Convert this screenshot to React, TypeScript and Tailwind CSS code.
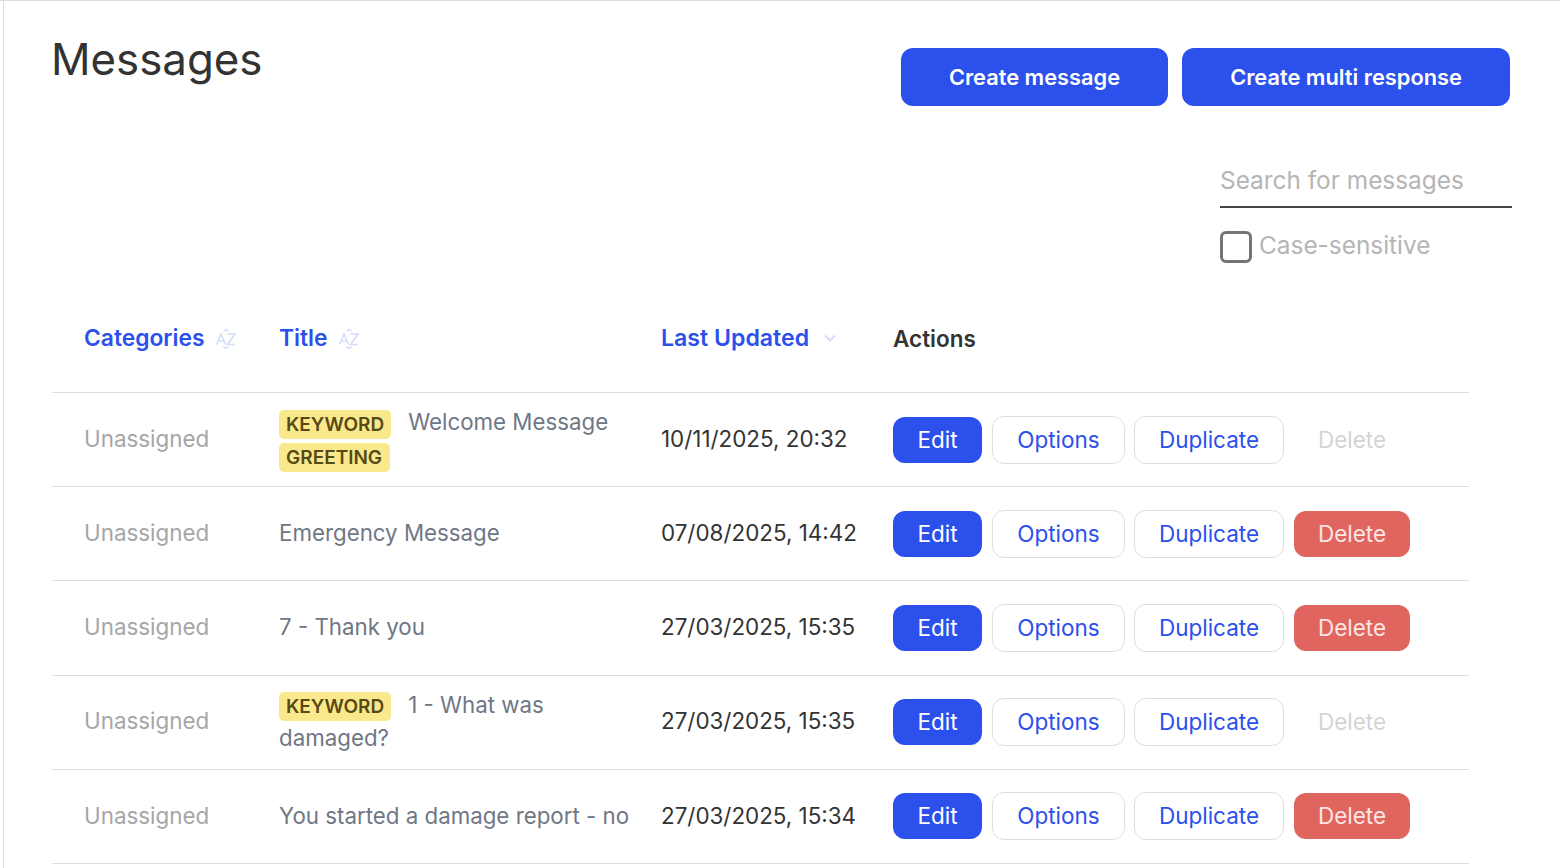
const rows = [
  { tags: ["KEYWORD"], after: ["GREETING"], title: "Welcome Message", date: "10/11/2025, 20:32", del: false },
  { tags: [], after: [], title: "Emergency Message", date: "07/08/2025, 14:42", del: true },
  { tags: [], after: [], title: "7 - Thank you", date: "27/03/2025, 15:35", del: true },
  { tags: ["KEYWORD"], after: [], title: "1 - What was damaged?", date: "27/03/2025, 15:35", del: false },
  { tags: [], after: [], title: "You started a damage report - no", date: "27/03/2025, 15:34", del: true },
];

function SortAZ() {
  return (
    <svg width="22" height="22" viewBox="0 0 22 22" fill="none" stroke="#d3dcfb" strokeWidth="1.6" className="ml-[10px]">
      <path d="M1.5 16.5 L6 6 L10.5 16.5 M3.2 12.8 H8.8" />
      <path d="M12.5 6 H20 L12.5 16.5 H20" />
      <path d="M8.5 3.5 L11 1.5 L13.5 3.5 M8.5 18.5 L11 20.5 L13.5 18.5" />
    </svg>
  );
}

function Chevron() {
  return (
    <svg width="14" height="10" viewBox="0 0 14 10" fill="none" stroke="#d3dcfb" strokeWidth="2" className="ml-[14px]">
      <path d="M2 2.5 L7 7.5 L12 2.5" />
    </svg>
  );
}

function Tag({ label, end }: { label: string; end?: boolean }) {
  return (
    <span className={end ? "inline-block h-[29px] min-w-[111px] px-[7px] rounded-[5px] bg-[#f9e98c] text-[#574a14] text-[19px] font-semibold leading-[30px] align-middle" : "inline-block h-[29px] px-[7px] mr-[17px] rounded-[5px] bg-[#f9e98c] text-[#574a14] text-[19px] font-semibold leading-[30px] align-middle"}>
      {label}
    </span>
  );
}

export default function App() {
  return (
    <div className="w-[1560px] h-[868px] overflow-hidden bg-white border-t border-[#dedede] font-['Inter',sans-serif] text-[22.5px]">
      <div className="h-full ml-[3px] border-l border-[#dedede] pl-[48px] pr-[48px]">
        <div className="flex justify-between items-start">
          <h1 className="mt-[30px] -ml-[1px] text-[43.8px] leading-[58px] text-[#333333]">Messages</h1>
          <div className="flex gap-[14px] mt-[47px] mr-[2px]">
            <button className="h-[58px] w-[267px] rounded-[12px] bg-[#2b50ec] text-white text-[21.8px] font-semibold">Create message</button>
            <button className="h-[58px] w-[328px] rounded-[12px] bg-[#2b50ec] text-white text-[21.8px] font-semibold">Create multi response</button>
          </div>
        </div>
        <div className="flex flex-col items-start ml-[1168px] mt-[47px] w-[292px]">
          <div className="w-full h-[55px] border-b-2 border-[#444444] text-[#b5b5b5] text-[24.4px] leading-[54px]">Search for messages</div>
          <label className="flex items-center h-[32px] mt-[23px] text-[#b5b5b5] text-[24.4px] leading-[32px]">
            <span className="w-[32px] h-[32px] rounded-[6px] border-[3px] border-[#757575] mr-[7px]" />
            <span className="pb-[4px]">Case-sensitive</span>
          </label>
        </div>
        <div className="w-[1417px] mt-[28px]">
          <div className="flex h-[102px] items-center pb-[6px] border-b border-[#dedede] font-semibold text-[#2b50ec]">
            <div className="w-[227px] pl-[32px] flex items-center text-[22.8px]">Categories<SortAZ /></div>
            <div className="w-[382px] flex items-center text-[22.8px]">Title<SortAZ /></div>
            <div className="w-[232px] flex items-center text-[23.1px]">Last Updated<Chevron /></div>
            <div className="text-[#333333]">Actions</div>
          </div>
          {rows.map((r) => (
            <div key={r.date + r.title} className="flex h-[94.2px] items-center border-b border-[#dedede]">
              <div className="w-[227px] pl-[32px] pb-[2px] text-[#a6a6a6] text-[22.4px]">Unassigned</div>
              <div className="w-[382px] pr-[25px] pb-[2px] text-[#6f7785] text-[22.3px] leading-[33px]">
                {r.tags.map((t) => <Tag key={t} label={t} />)}
                {r.title}
                {r.after.map((t) => <Tag key={t} label={t} end />)}
              </div>
              <div className="w-[232px] pb-[2px] text-[#333333] text-[22.4px]">{r.date}</div>
              <div className="flex items-center">
                <button className="h-[46px] w-[89px] rounded-[12px] bg-[#2b50ec] text-white">Edit</button>
                <div className="flex gap-[9px] ml-[10px]">
                  <button className="h-[48px] w-[133px] rounded-[12px] border border-[#dedede] bg-white text-[#2b50ec]">Options</button>
                  <button className="h-[48px] w-[150px] rounded-[12px] border border-[#dedede] bg-white text-[#2b50ec]">Duplicate</button>
                </div>
                {r.del ? (
                  <button className="ml-[10px] h-[46px] w-[116px] rounded-[12px] bg-[#e0655f] text-[#fbe6e5]">Delete</button>
                ) : (
                  <button className="ml-[10px] h-[46px] w-[116px] text-[#d4d4d4]">Delete</button>
                )}
              </div>
            </div>
          ))}
        </div>
      </div>
    </div>
  );
}
